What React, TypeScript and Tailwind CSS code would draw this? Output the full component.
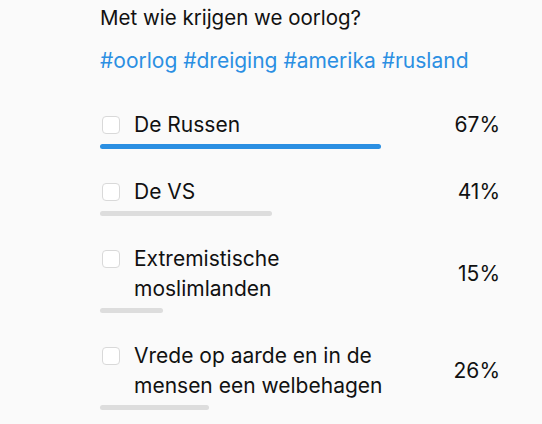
import React from "react";

const options: { lines: string[]; pct: number; active?: boolean }[] = [
  { lines: ["De Russen"], pct: 67, active: true },
  { lines: ["De VS"], pct: 41 },
  { lines: ["Extremistische", "moslimlanden"], pct: 15 },
  { lines: ["Vrede op aarde en in de", "mensen een welbehagen"], pct: 26 },
];

export default function App() {
  return (
    <div
      className="w-[542px] h-[424px] overflow-hidden bg-[#fafafa] pl-[100px] text-[#111111]"
      style={{ fontFamily: "Inter, 'Noto Sans', sans-serif" }}
    >
      <div className="w-[400px] pt-[3px]">
        <div className="text-[20.5px] leading-[30px]">Met wie krijgen we oorlog?</div>
        <div className="mt-[13px] text-[21px] leading-[30px] text-[#2b8fe2]">
          #oorlog #dreiging #amerika #rusland
        </div>
        <div className="mt-[34px] flex flex-col gap-[28px]">
          {options.map((o, i) => (
            <div key={i} className="flex flex-col">
              <div className="flex items-center justify-between">
                <div className="flex items-start">
                  <div className="ml-[2px] mt-[6px] h-[18px] w-[18px] rounded-[4px] border-[1.5px] border-[#d9d9d9] bg-white" />
                  <div className="ml-[14px] text-[21px] leading-[30px]">
                    {o.lines.map((l, j) => (
                      <div key={j}>{l}</div>
                    ))}
                  </div>
                </div>
                <div className="text-[21px] leading-[30px]">{o.pct}%</div>
              </div>
              <div
                className={
                  "mt-[4px] h-[5px] rounded-full " +
                  (o.active ? "bg-[#2b8fe2]" : "bg-[#dddddd]")
                }
                style={{ width: `${Math.round(o.pct * 4.2)}px` }}
              />
            </div>
          ))}
        </div>
      </div>
    </div>
  );
}
